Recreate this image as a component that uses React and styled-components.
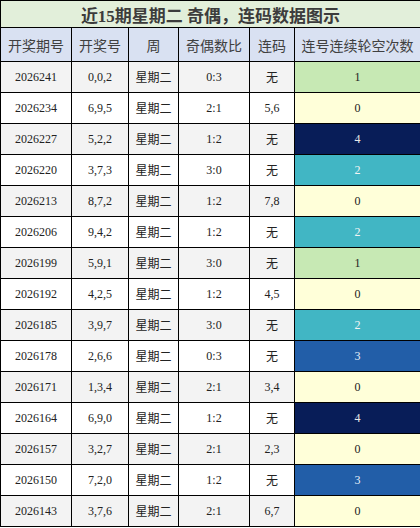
import React from 'react';
import styled, { createGlobalStyle } from 'styled-components';

const GlobalStyle = createGlobalStyle`
	body {
		margin: 0;
		background: #fff;
	}
`;

const rows = [
	['2026241', '0,0,2', '0:3', '无', 1],
	['2026234', '6,9,5', '2:1', '5,6', 0],
	['2026227', '5,2,2', '1:2', '无', 4],
	['2026220', '3,7,3', '3:0', '无', 2],
	['2026213', '8,7,2', '1:2', '7,8', 0],
	['2026206', '9,4,2', '1:2', '无', 2],
	['2026199', '5,9,1', '3:0', '无', 1],
	['2026192', '4,2,5', '1:2', '4,5', 0],
	['2026185', '3,9,7', '3:0', '无', 2],
	['2026178', '2,6,6', '0:3', '无', 3],
	['2026171', '1,3,4', '2:1', '3,4', 0],
	['2026164', '6,9,0', '1:2', '无', 4],
	['2026157', '3,2,7', '2:1', '2,3', 0],
	['2026150', '7,2,0', '1:2', '无', 3],
	['2026143', '3,7,6', '2:1', '6,7', 0],
];

// YlGnBu 色阶
const heat = {
	0: { bg: '#ffffd9', fg: '#222' },
	1: { bg: '#c7e9b4', fg: '#222' },
	2: { bg: '#41b6c4', fg: '#f4f4f4' },
	3: { bg: '#225ea8', fg: '#e8eef8' },
	4: { bg: '#081d58', fg: '#e8e8e8' },
};

const Table = styled.table`
	width: 420px;
	border-collapse: collapse;
	table-layout: fixed;
	font-family: 'Liberation Serif', 'Noto Sans CJK SC', serif;
	color: #222;

	td,
	th {
		border: 1px solid #000;
		padding: 0;
		text-align: center;
	}
`;

const TitleCell = styled.th`
	height: 26px;
	background: #e2efda;
	font-size: 17px;
	font-weight: bold;
	color: #3c3c3c;
`;

const HeadCell = styled.th`
	height: 33px;
	background: #d9e1f2;
	font-family: 'Noto Sans CJK SC', sans-serif;
	font-size: 14px;
	font-weight: normal;
	color: #404040;
`;

const Row = styled.tr`
	background: ${p => (p.$even ? '#ffffff' : '#f3f3f3')};
`;

const Cell = styled.td`
	height: 30px;
	font-size: 12px;
`;

const HeatCell = styled(Cell)`
	background: ${p => heat[p.$v].bg};
	color: ${p => heat[p.$v].fg};
`;

const App = () => (
	<>
		<GlobalStyle />
		<Table>
			<colgroup>
				<col style={{ width: 71 }} />
				<col style={{ width: 57 }} />
				<col style={{ width: 50 }} />
				<col style={{ width: 71 }} />
				<col style={{ width: 45 }} />
				<col style={{ width: 126 }} />
			</colgroup>
			<thead>
				<tr>
					<TitleCell colSpan={6}>近15期星期二 奇偶，连码数据图示</TitleCell>
				</tr>
				<tr>
					<HeadCell>开奖期号</HeadCell>
					<HeadCell>开奖号</HeadCell>
					<HeadCell>周</HeadCell>
					<HeadCell>奇偶数比</HeadCell>
					<HeadCell>连码</HeadCell>
					<HeadCell>连号连续轮空次数</HeadCell>
				</tr>
			</thead>
			<tbody>
				{rows.map(([issue, nums, ratio, link, miss], i) => (
					<Row key={issue} $even={i % 2 === 1}>
						<Cell>{issue}</Cell>
						<Cell>{nums}</Cell>
						<Cell>星期二</Cell>
						<Cell>{ratio}</Cell>
						<Cell>{link}</Cell>
						<HeatCell $v={miss}>{miss}</HeatCell>
					</Row>
				))}
			</tbody>
		</Table>
	</>
);

export default App;
